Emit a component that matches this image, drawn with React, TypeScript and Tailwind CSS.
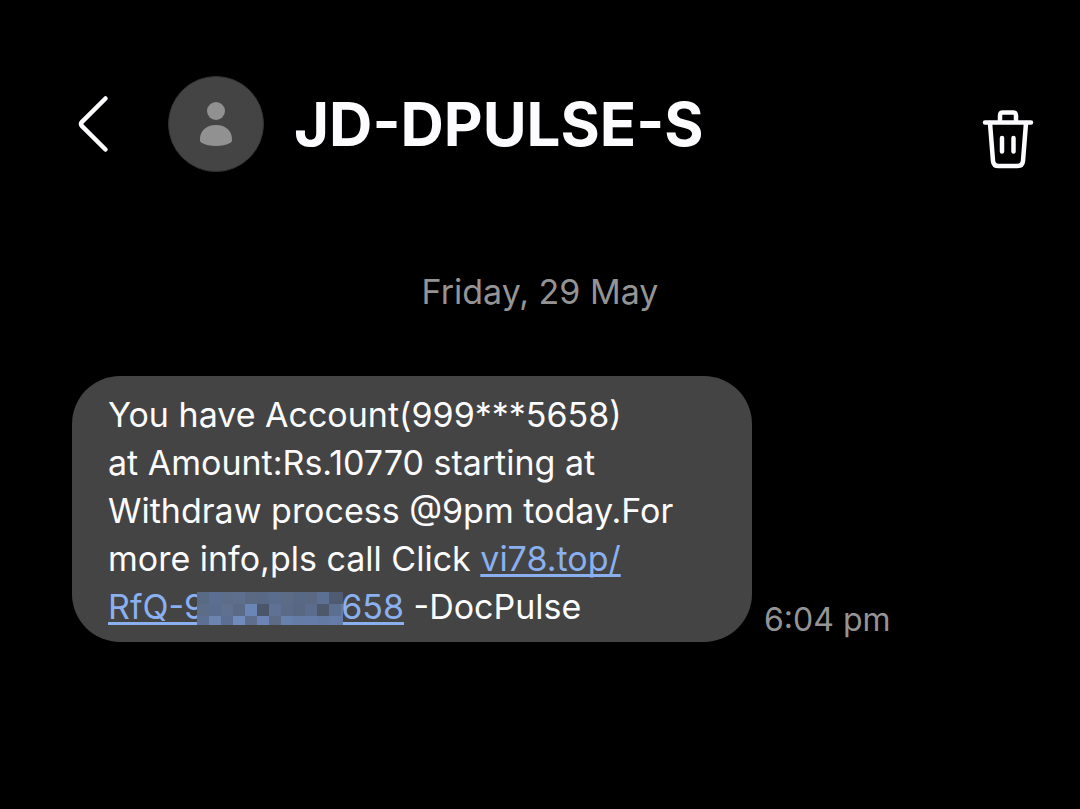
import React from 'react';

// Shades of the censored part of the link, row by row.
const MOSAIC = [
  ['#586a84', '#5c6f92', '#5d6e8b', '#5d6f8c', '#5b6a82', '#596985', '#5a6d8c', '#5d6c86', '#576984', '#5a6883', '#5c7093', '#4e5b70', '#4e5b70'],
  ['#5d6c87', '#5a6d8e', '#60708f', '#5b6a87', '#6a86b6', '#4b566b', '#5f7296', '#5a6a87', '#586882', '#5b6c8c', '#4d586b', '#5d6f90', '#637ca6'],
  ['#5d6f92', '#6c84b0', '#5c6f93', '#6f8cbd', '#5e6e8c', '#6b86b6', '#5d6b86', '#6780ac', '#657ca6', '#657ca8', '#637aa3', '#657ca8', '#657ca8'],
];

const Mosaic: React.FC = () => (
  <svg
    className="relative z-10 -mr-0.5 -ml-2 inline-block align-[-6px]"
    width="146"
    height="33"
    viewBox="0 0 146 33"
    shapeRendering="crispEdges"
    aria-hidden="true"
  >
    {MOSAIC.map((row, y) =>
      row.map((fill, x) => <rect key={`${x}-${y}`} x={x * 12} y={y * 12} width="12" height="12" fill={fill} />)
    )}
  </svg>
);

const Header: React.FC = () => (
  <header className="flex items-center pr-10 pl-[72px]">
    <button type="button" aria-label="Back" className="shrink-0">
      <svg width="48" height="64" viewBox="0 0 48 64" fill="none" stroke="#fcfcff" strokeWidth="4.5" strokeLinecap="round" strokeLinejoin="round">
        <path d="M33.5 6.5L10 29.8Q8 32 10 34.2L33.5 57.5" />
      </svg>
    </button>
    <svg className="ml-12 shrink-0" width="96" height="96" viewBox="0 0 96 96" aria-hidden="true">
      <circle cx="48" cy="48" r="47.5" fill="#444444" stroke="#333333" />
      <circle cx="48" cy="35" r="9" fill="#919191" />
      <path d="M32 64.5C31.5 55 38 49 48 49S64.5 55 64 64.5Q64 66 62.5 66.7Q56 70 48 70T33.5 66.7Q32 66 32 64.5Z" fill="#919191" />
    </svg>
    <h1 className="ml-[30px] flex-1 text-[60px] leading-[96px] font-bold whitespace-nowrap text-[#fcfcff]">JD-DPULSE-S</h1>
    <button type="button" aria-label="Delete" className="shrink-0 self-end">
      <svg width="64" height="64" viewBox="0 0 64 64" fill="none" stroke="#fcfcff" strokeWidth="4.5" strokeLinecap="round" strokeLinejoin="round">
        <path d="M9 14.5H55M24 14.5V7.5Q24 4.5 27 4.5H37Q40 4.5 40 7.5V14.5" />
        <path d="M14 15L17 53Q17.5 58 22.5 58H41.5Q46.5 58 47 53L50 15" />
        <path d="M26 30V43.5M37.5 30V43.5" />
      </svg>
    </button>
  </header>
);

const linkClass = 'text-[#8ab0f0] underline decoration-[3px] underline-offset-[3px] [text-decoration-skip-ink:none]';

const App: React.FC = () => {
  return (
    <div className="min-h-screen bg-black pt-[76px] font-[Inter,sans-serif]">
      <Header />

      <main className="px-[72px] pt-24">
        <p className="text-center text-[34px] leading-12 text-[#949494]">Friday, 29 May</p>

        <div className="mt-15 flex items-end gap-3">
          <p className="max-w-[680px] flex-1 rounded-[48px] bg-[#444444] px-9 pt-[15px] pb-[11px] text-[34px] leading-12 text-[#fcfcff]">
            You have Account(999***5658)
            <br />
            at Amount:Rs.10770 starting at
            <br />
            Withdraw process @9pm today.For
            <br />
            more info,pls call Click{' '}
            <a href="#" className={linkClass}>
              vi78.top/
              <br />
              RfQ-9
              <Mosaic />
              658
            </a>{' '}
            -DocPulse
          </p>
          <time className="text-[32px] leading-[44px] whitespace-nowrap text-[#949494]">6:04 pm</time>
        </div>
      </main>
    </div>
  );
};

export default App;
